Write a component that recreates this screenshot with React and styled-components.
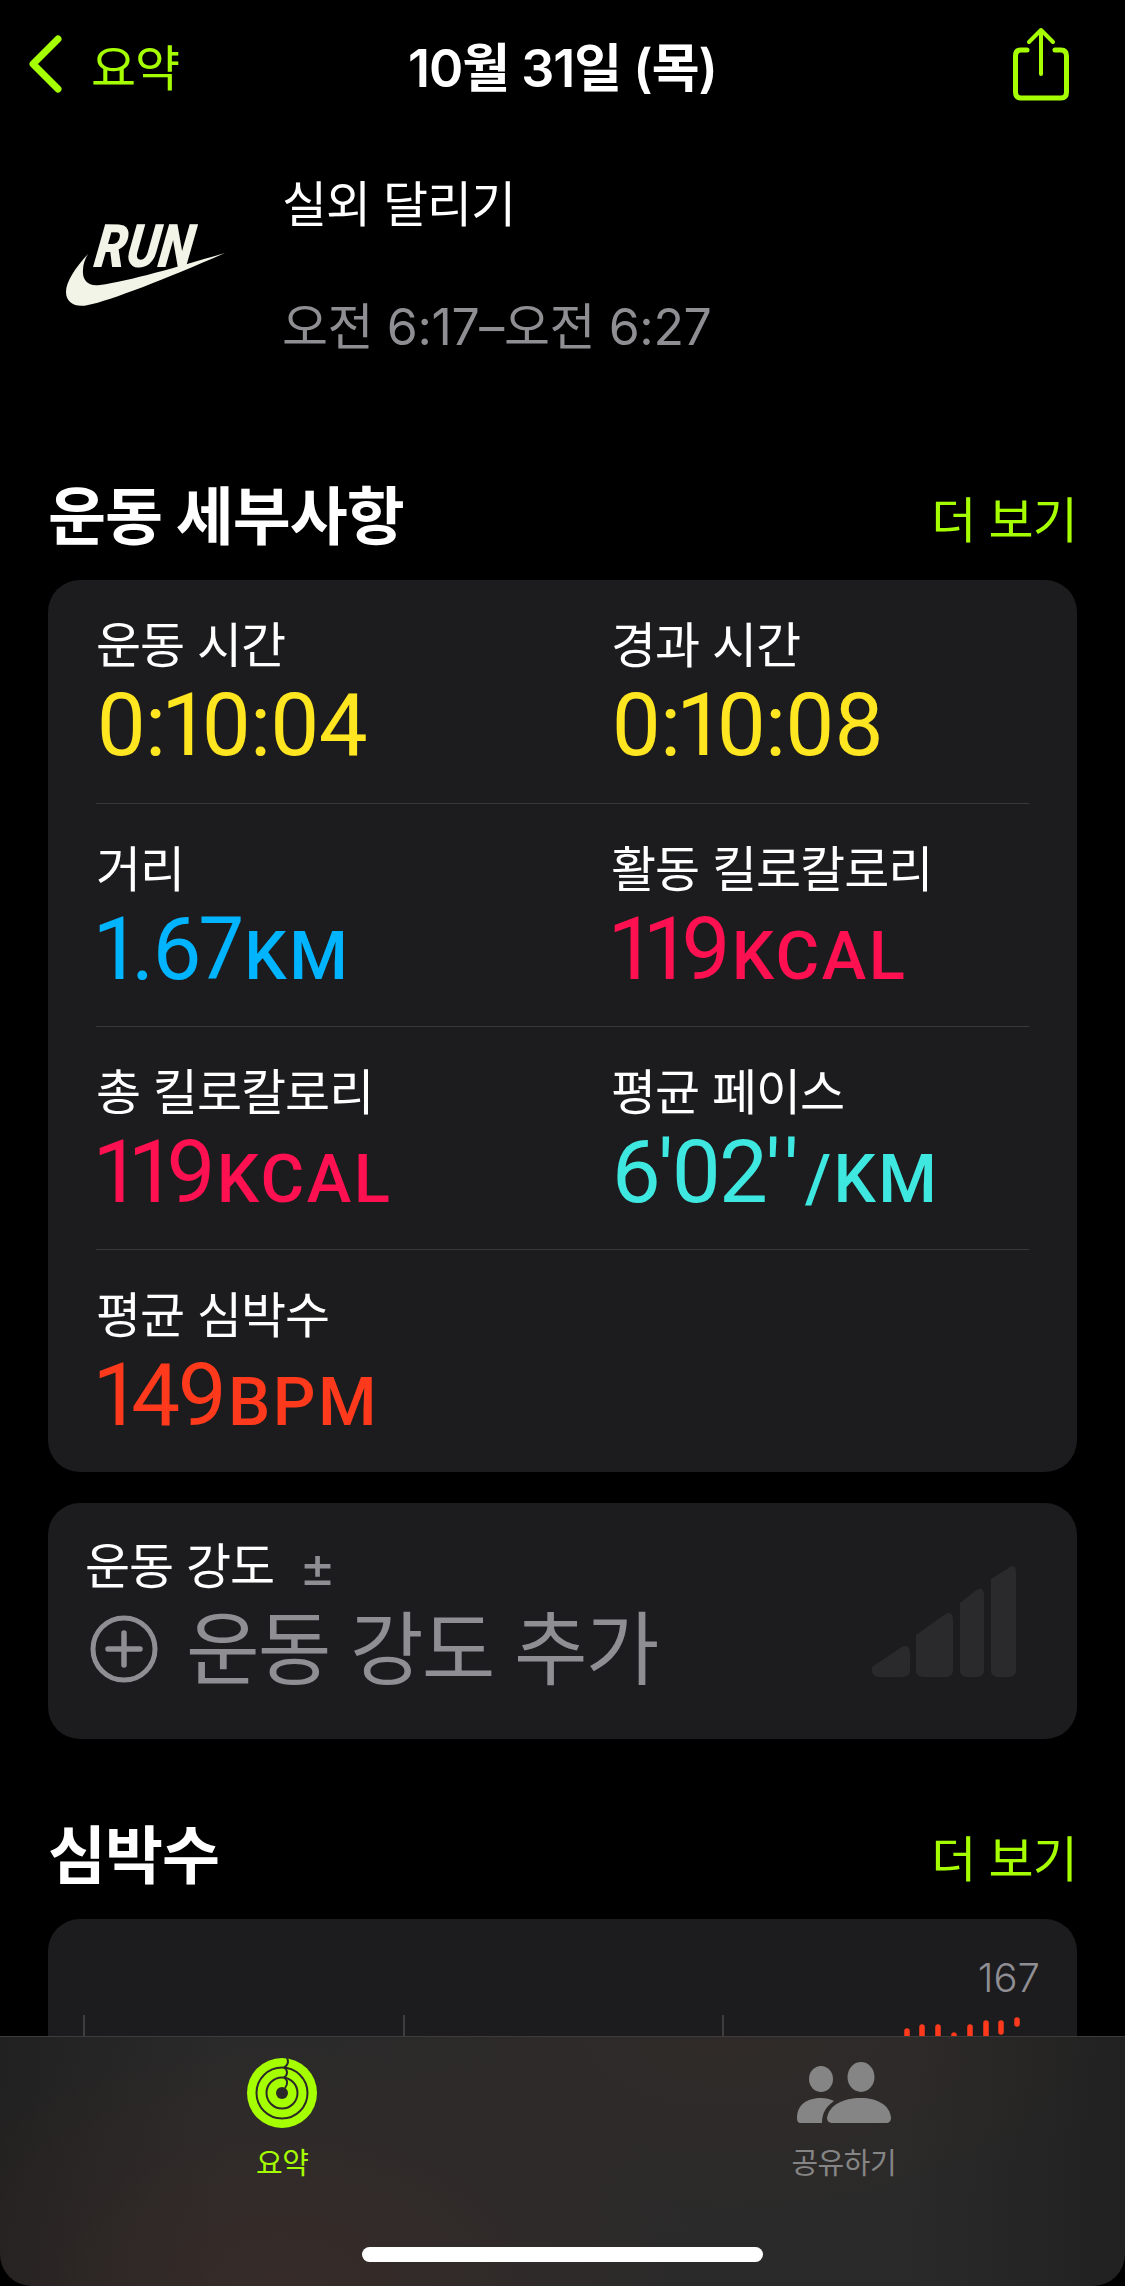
import React from 'react';
import styled, { createGlobalStyle } from 'styled-components';

const LIME = '#a6ff00';
const GRAY = '#8e8e93';
const CARD = '#1c1c1e';

const GlobalStyle = createGlobalStyle`
    html, body {
        margin: 0;
        padding: 0;
        background: #000;
    }

    body {
        font-family: Inter, "Noto Sans CJK KR", sans-serif;
        color: #fff;
    }
`;

const Screen = styled.div`
    position: relative;
    width: 1125px;
    height: 2286px;
    overflow: hidden;
    background: #000;
`;

const NavBar = styled.div`
    display: grid;
    grid-template-columns: 1fr auto 1fr;
    align-items: center;
    height: 132px;
    box-sizing: border-box;
    padding: 0 28px 4px;
`;

const BackLink = styled.div`
    display: flex;
    align-items: center;
    gap: 29px;
    color: ${LIME};
    font-size: 49px;
    letter-spacing: -1px;
`;

const NavTitle = styled.div`
    font-size: 52px;
    font-weight: 600;
    letter-spacing: -1px;
`;

const ShareButton = styled.div`
    display: flex;
    justify-content: flex-end;
    margin-right: 28px;
`;

const WorkoutHeader = styled.div`
    display: flex;
    height: 288px;
    padding: 30px 0 0 65px;
    box-sizing: border-box;
`;

const WorkoutText = styled.div`
    margin-left: 56px;
    margin-top: 3px;
`;

const WorkoutName = styled.div`
    font-size: 49px;
    line-height: 80px;
    letter-spacing: -1px;
`;

const WorkoutTime = styled.div`
    margin-top: 42px;
    font-size: 50px;
    line-height: 80px;
    letter-spacing: -0.4px;
    color: ${GRAY};
`;

const LogoMark = styled.svg`
    margin-top: 60px;
    flex: none;
    overflow: visible;
`;

const SectionHead = styled.div`
    display: flex;
    justify-content: space-between;
    align-items: center;
    height: 90px;
    margin: ${p => p.$top}px 48px 24px;
`;

const SectionTitle = styled.div`
    font-size: 63px;
    font-weight: 700;
    letter-spacing: -1px;
`;

const MoreLink = styled.div`
    font-size: 49px;
    color: ${LIME};
    letter-spacing: -0.8px;
    margin-top: 11px;
`;

const Card = styled.div`
    margin: 0 48px;
    background: ${CARD};
    border-radius: 32px;
`;

const MetricRow = styled.div`
    display: grid;
    grid-template-columns: 515px 1fr;
    height: 223px;
    padding: 33px 0 0;
    margin: 0 48px;
    box-sizing: border-box;
    border-top: ${p => (p.$first ? 'none' : '1.5px solid #38383a')};
`;

const MetricLabel = styled.div`
    font-size: 49px;
    line-height: 66px;
    letter-spacing: -1px;
`;

const MetricValue = styled.div`
    font-family: Roboto, sans-serif;
    font-size: 87px;
    line-height: 92px;
    font-weight: 400;
    letter-spacing: ${p => p.$spacing ?? -2.5}px;
    font-variant-numeric: proportional-nums;
    font-variant-ligatures: none;
    color: ${p => p.$color};
`;

const Primes = styled.span`
    font-kerning: none;
    letter-spacing: 3px;
`;

const Unit = styled.span`
    font-size: 67px;
    font-weight: 500;
    letter-spacing: 2.5px;
    margin-left: 3px;
`;

const IntensityCard = styled(Card)`
    position: relative;
    height: 236px;
    margin-top: 31px;
    padding: 34px 37px;
    box-sizing: border-box;
    overflow: hidden;
`;

const IntensityLabel = styled.div`
    display: flex;
    align-items: center;
    gap: 25px;
    font-size: 49px;
    line-height: 60px;
    letter-spacing: -1px;
`;

const PlusMinus = styled.span`
    font-size: 56px;
    font-weight: 400;
    color: ${GRAY};
`;

const IntensityRow = styled.div`
    display: flex;
    align-items: center;
    gap: 28px;
    margin-top: 2px;
    padding-left: 5px;
`;

const IntensityAdd = styled.div`
    font-size: 80px;
    line-height: 100px;
    letter-spacing: -1.9px;
    color: ${GRAY};
`;

const LevelBars = styled.svg`
    position: absolute;
    right: 60px;
    bottom: 62px;
`;

const HeartCard = styled(Card)`
    height: 200px;
    padding: 34px 37px 0 39px;
    box-sizing: border-box;
`;

const HeartMax = styled.div`
    text-align: right;
    font-size: 40px;
    font-weight: 300;
    line-height: 50px;
    color: ${GRAY};
`;

const ChartStrip = styled.svg`
    display: block;
    margin: 0 -37px 0 -39px;
`;

const TabBar = styled.div`
    position: absolute;
    left: 0;
    right: 0;
    bottom: 0;
    height: 250px;
    display: grid;
    grid-template-columns: 1fr 1fr;
    box-sizing: border-box;
    padding: 20px 0 0;
    border-top: 1.5px solid #3c3c3c;
    border-radius: 0 0 32px 32px;
    background:
        radial-gradient(420px 260px at 25% 100%, rgba(70, 45, 38, 0.45), transparent),
        radial-gradient(400px 200px at 65% 0%, rgba(60, 45, 38, 0.35), transparent),
        linear-gradient(90deg, #212121, #2a2a2a 20%, #2a2a2a 80%, #212121);
`;

const Tab = styled.div`
    display: flex;
    flex-direction: column;
    align-items: center;
    color: ${p => p.$color};
    transform: translateX(${p => p.$shift}px);
`;

const TabIcon = styled.div`
    display: flex;
    align-items: center;
    height: 72px;
`;

const TabLabel = styled.div`
    font-size: 29px;
    line-height: 40px;
    margin-top: 15px;
    letter-spacing: -0.5px;
`;

const HomeIndicator = styled.div`
    position: absolute;
    left: 362px;
    bottom: 24px;
    width: 401px;
    height: 15px;
    border-radius: 8px;
    background: #fff;
`;

const metrics = [
    [
        { label: '운동 시간', value: '0:10:04', color: '#ffe620', spacing: -1.5 },
        { label: '경과 시간', value: '0:10:08', color: '#ffe620', spacing: -1.5 },
    ],
    [
        { label: '거리', value: '1.67', unit: 'KM', color: '#00b4ff' },
        { label: '활동 킬로칼로리', value: '119', unit: 'KCAL', color: '#ff1050' },
    ],
    [
        { label: '총 킬로칼로리', value: '119', unit: 'KCAL', color: '#ff1050' },
        { label: '평균 페이스', value: "6'02", primes: "''", unit: '/KM', color: '#3ee8e0' },
    ],
    [{ label: '평균 심박수', value: '149', unit: 'BPM', color: '#ff3a1c' }],
];

// x, top and bottom of each heart rate sample
const heartBars = [
    [907, 2032, 2042], [922, 2028, 2042], [938, 2028, 2042], [954, 2036, 2042],
    [970, 2028, 2042], [986, 2024, 2042], [1001, 2024, 2033], [1017, 2021, 2025],
];

function Chevron() {
    return (
        <svg width="34" height="58" viewBox="0 0 34 58">
            <path d="M30 4 L5 29 L30 54" fill="none" stroke={LIME} strokeWidth="7" strokeLinecap="round" strokeLinejoin="round" />
        </svg>
    );
}

function ShareIcon() {
    return (
        <svg width="56" height="74" viewBox="0 0 56 74">
            <path
                d="M14 23 H8 Q2.5 23 2.5 29 V65 Q2.5 71 8 71 H48 Q53.5 71 53.5 65 V29 Q53.5 23 48 23 H42"
                fill="none" stroke={LIME} strokeWidth="5" strokeLinecap="round"
            />
            <path d="M28 47 V3 M16 15 L28 3 L40 15" fill="none" stroke={LIME} strokeWidth="4" strokeLinecap="round" strokeLinejoin="round" />
        </svg>
    );
}

function RunLogo() {
    return (
        <LogoMark width="161" height="90" viewBox="65 222 161 90">
            <text
                transform="translate(93 267) skewX(-8)"
                fontFamily="Roboto, sans-serif" fontWeight="900" fontStyle="italic"
                fontSize="60" fill="#f3f4e8"
                textLength="98" lengthAdjust="spacingAndGlyphs"
            >
                RUN
            </text>
            <path
                d="M88 254 C75 268 66 282 66 292 C66 303 76 308 88 305 C110 301 170 277 225 253 C180 266 130 281 100 285 C88 287 82 280 83 270 C83 264 85 259 88 254 Z"
                fill="#f3f4e8"
            />
        </LogoMark>
    );
}

function PlusCircle() {
    return (
        <svg width="68" height="68" viewBox="0 0 68 68">
            <circle cx="34" cy="34" r="31" fill="none" stroke={GRAY} strokeWidth="5" />
            <path d="M34 18 V50 M18 34 H50" stroke={GRAY} strokeWidth="5.5" strokeLinecap="round" />
        </svg>
    );
}

function Rings() {
    const dark = '#2b2928';
    return (
        <svg width="70" height="70" viewBox="-35 -35 70 70">
            <circle r="35" fill={LIME} />
            <circle r="25.5" fill="none" stroke={dark} strokeWidth="2" />
            <circle r="15.5" fill="none" stroke={dark} strokeWidth="2" />
            <circle r="6" fill={dark} />
            <path d="M5 -35 C7 -31 6 -28 2 -25.5" fill="none" stroke={dark} strokeWidth="2" />
            <path d="M2 -25.5 C6 -23 6 -18 2 -15.5" fill="none" stroke={dark} strokeWidth="2" />
            <path d="M2 -15.5 C6 -13 6 -9 3 -5" fill="none" stroke={dark} strokeWidth="2" />
        </svg>
    );
}

function PeopleIcon() {
    return (
        <svg width="94" height="62" viewBox="0 0 94 62" fill="#858585">
            <ellipse cx="24" cy="17" rx="12" ry="13" />
            <ellipse cx="64" cy="15" rx="13.5" ry="15" />
            <path d="M0 56 C0 42 11 36 24 36 C29 36 33 37 37 39 C30 44 25 50 25 61 H4 C1 61 0 59 0 56 Z" />
            <path d="M36 61 C32 61 30 59 30 56 C32 43 46 36 64 36 C80 36 93 43 94 56 C94 59 92 61 89 61 Z" />
        </svg>
    );
}

function App() {
    return (
        <Screen>
            <GlobalStyle />
            <NavBar>
                <BackLink>
                    <Chevron />
                    요약
                </BackLink>
                <NavTitle>10월 31일 (목)</NavTitle>
                <ShareButton>
                    <ShareIcon />
                </ShareButton>
            </NavBar>

            <WorkoutHeader>
                <RunLogo />
                <WorkoutText>
                    <WorkoutName>실외 달리기</WorkoutName>
                    <WorkoutTime>오전 6:17–오전 6:27</WorkoutTime>
                </WorkoutText>
            </WorkoutHeader>

            <SectionHead $top={46}>
                <SectionTitle>운동 세부사항</SectionTitle>
                <MoreLink>더 보기</MoreLink>
            </SectionHead>

            <Card>
                {metrics.map((row, i) => (
                    <MetricRow key={i} $first={i === 0}>
                        {row.map(m => (
                            <div key={m.label}>
                                <MetricLabel>{m.label}</MetricLabel>
                                <MetricValue $color={m.color} $spacing={m.spacing}>
                                    {m.value}
                                    {m.primes && <Primes>{m.primes}</Primes>}
                                    {m.unit && <Unit>{m.unit}</Unit>}
                                </MetricValue>
                            </div>
                        ))}
                    </MetricRow>
                ))}
            </Card>

            <IntensityCard>
                <IntensityLabel>
                    운동 강도
                    <PlusMinus>±</PlusMinus>
                </IntensityLabel>
                <IntensityRow>
                    <PlusCircle />
                    <IntensityAdd>운동 강도 추가</IntensityAdd>
                </IntensityRow>
                <LevelBars width="145" height="111" viewBox="873 1565 145 111" fill="#2a2a2d">
                    <path d="M873 1666 L901 1647 Q911 1641 911 1652 V1669 Q911 1676 904 1676 H880 Q873 1676 873 1669 Z" />
                    <path d="M917 1634 L945 1614 Q954 1608 954 1620 V1669 Q954 1676 947 1676 H924 Q917 1676 917 1669 Z" />
                    <path d="M961 1602 L975 1591 Q985 1583 985 1595 V1669 Q985 1676 978 1676 H968 Q961 1676 961 1669 Z" />
                    <path d="M992 1578 L1008 1568 Q1017 1560 1017 1572 V1669 Q1017 1676 1010 1676 H999 Q992 1676 992 1669 Z" />
                </LevelBars>
            </IntensityCard>

            <SectionHead $top={66}>
                <SectionTitle>심박수</SectionTitle>
                <MoreLink>더 보기</MoreLink>
            </SectionHead>

            <HeartCard>
                <HeartMax>167</HeartMax>
                <ChartStrip width="1029" height="38" viewBox="48 2004 1029 38">
                    {[84, 404, 723].map(x => (
                        <line key={x} x1={x} x2={x} y1="2016" y2="2042" stroke="#48484a" strokeWidth="1.5" />
                    ))}
                    {heartBars.map(([x, top, bottom]) => (
                        <line key={x} x1={x} x2={x} y1={top} y2={bottom} stroke="#ff3a1c" strokeWidth="5.5" strokeLinecap="round" />
                    ))}
                </ChartStrip>
            </HeartCard>

            <TabBar>
                <Tab $color={LIME} $shift={1}>
                    <TabIcon>
                        <Rings />
                    </TabIcon>
                    <TabLabel>요약</TabLabel>
                </Tab>
                <Tab $color="#858585" $shift={0}>
                    <TabIcon>
                        <PeopleIcon />
                    </TabIcon>
                    <TabLabel>공유하기</TabLabel>
                </Tab>
                <HomeIndicator />
            </TabBar>
        </Screen>
    );
}

export default App;
